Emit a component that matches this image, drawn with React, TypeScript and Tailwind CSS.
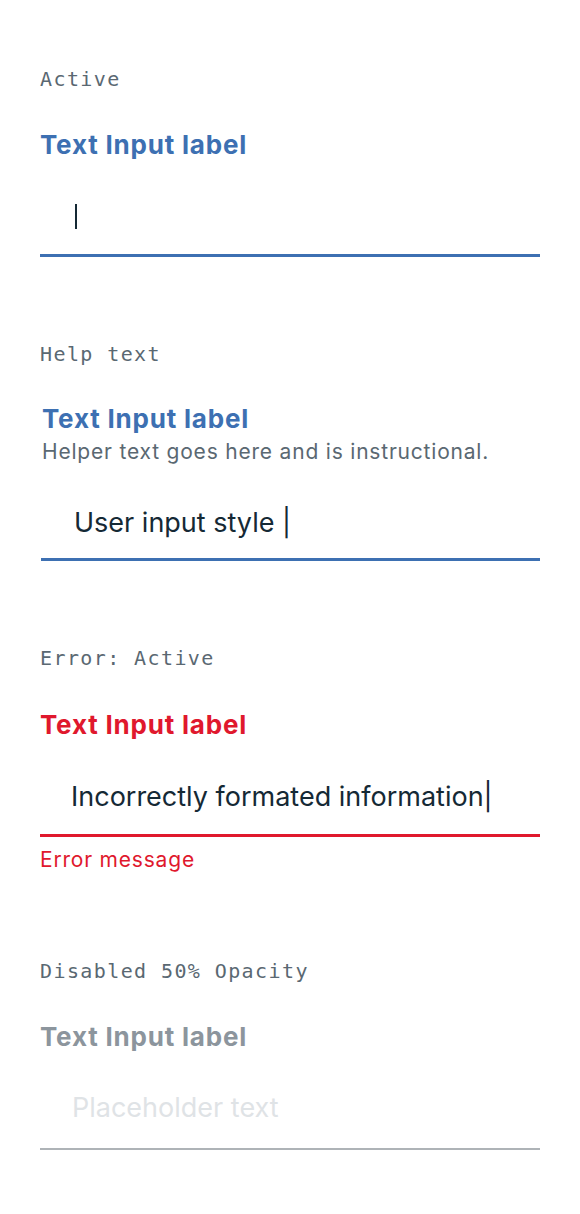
import React from "react";

const sans = "font-['Inter','Noto_Sans',sans-serif]";
const mono = "font-['DejaVu_Sans_Mono','Liberation_Mono',monospace]";
const title = `${mono} text-[20px] leading-[24px] tracking-[1.4px] text-[#5a6872]`;
const label = `${sans} text-[26px] font-bold leading-[32px] tracking-[0.8px]`;
const small = `${sans} text-[21px] leading-[24px] tracking-[0.8px]`;
const value = `${sans} text-[27px] leading-[32px]`;

export default function App() {
  return (
    <div className="min-h-[1214px] w-[580px] bg-white px-[40px] pt-[67px]">
      {/* Active */}
      <section>
        <div className={title}>Active</div>
        <div className={`${label} mt-[38px] text-[#3d70b2]`}>Text Input label</div>
        <div className="border-b-[3px] border-[#3d70b2] pb-[23px] pl-[35px] pt-[38px]">
          <div className="flex h-[32px] items-center">
            <div className="h-[25px] w-[2px] translate-y-[1px] bg-[#152935]" />
          </div>
        </div>
      </section>

      {/* Help text */}
      <section className="mt-[85px]">
        <div className={title}>Help text</div>
        <div className={`${label} ml-[2px] mt-[37px] text-[#3d70b2]`}>Text Input label</div>
        <div className={`${small} ml-[2px] mt-[5px] text-[#5a6872]`}>Helper text goes here and is instructional.</div>
        <div className="ml-[1px] border-b-[3px] border-[#3d70b2] pb-[19px] pl-[33px] pt-[43px]">
          <div className={`${value} text-[#152935]`}>User input style |</div>
        </div>
      </section>

      {/* Error */}
      <section className="mt-[85px]">
        <div className={title}>Error: Active</div>
        <div className={`${label} mt-[39px] text-[#e0182d]`}>Text Input label</div>
        <div className="border-b-[3px] border-[#e0182d] pb-[21px] pl-[31px] pt-[40px]">
          <div className={`${value} text-[#152935]`}>Incorrectly formated information|</div>
        </div>
        <div className={`${small} mt-[11px] text-[#e0182d]`}>Error message</div>
      </section>

      {/* Disabled */}
      <section className="mt-[87px]">
        <div className={title}>Disabled 50% Opacity</div>
        <div className={`${label} mt-[38px] text-[#8c959d]`}>Text Input label</div>
        <div className="border-b-[2px] border-[#aeb3b7] pb-[24px] pl-[32px] pt-[39px]">
          <div className={`${value} text-[#dfe3e6]`}>Placeholder text</div>
        </div>
      </section>
    </div>
  );
}
